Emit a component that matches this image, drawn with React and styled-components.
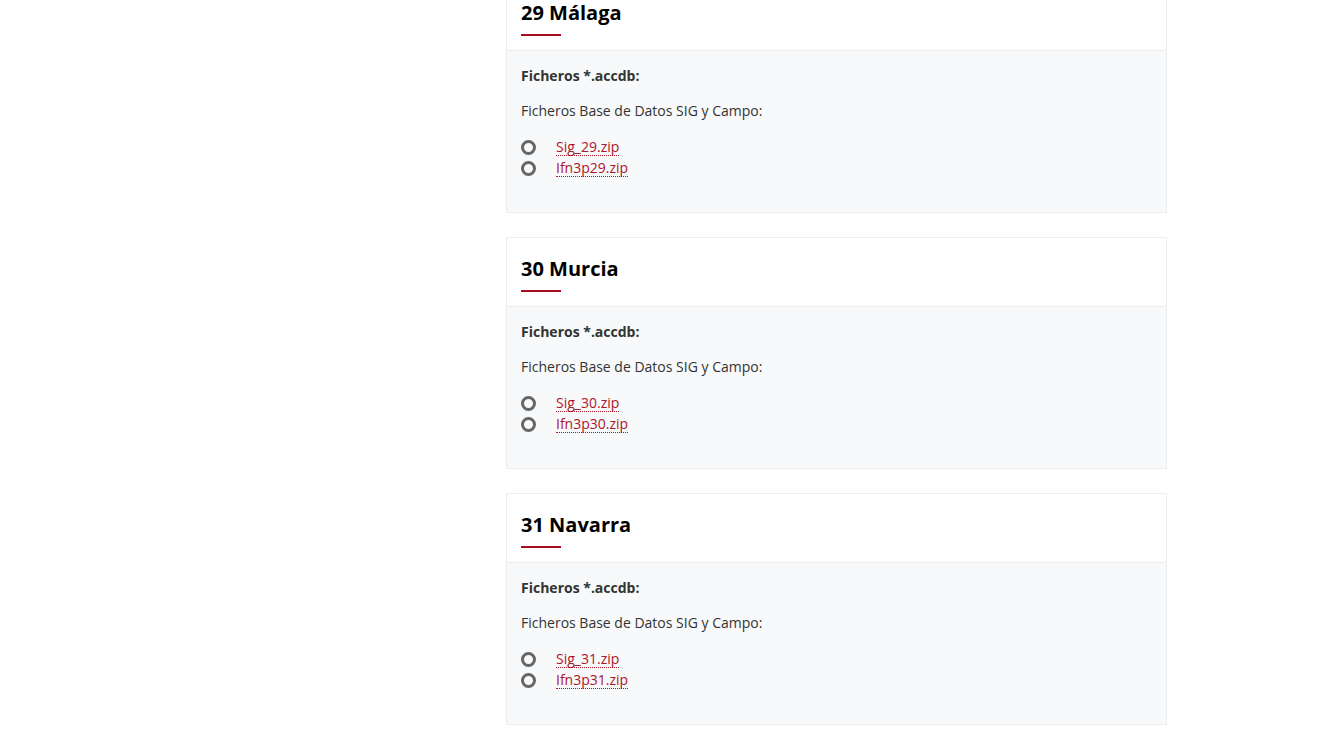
import React from "react";
import styled, { createGlobalStyle } from "styled-components";

const Global = createGlobalStyle`
  html, body { margin: 0; padding: 0; background: #fff; }
  body { font-family: "Open Sans", "Noto Sans", sans-serif; color: #333; }
  * { box-sizing: border-box; }
`;

const Page = styled.div`
  display: grid;
  grid-template-columns: 506px 661px 1fr;
  margin-top: -19px;
`;

const Column = styled.div`
  grid-column: 2;
  display: flex;
  flex-direction: column;
  gap: 24px;
`;

const Card = styled.section`
  border: 1px solid #ededed;
  background: #fff;
`;

const Header = styled.div`
  padding: 18px 14px 14px;
  border-bottom: 1px solid #ededed;
`;

const Title = styled.h2`
  margin: 0;
  font-size: 20px;
  line-height: 26px;
  font-weight: 700;
  color: #000;
`;

const Rule = styled.div`
  width: 40px;
  height: 2px;
  background: #a50e1e;
  margin-top: 8px;
`;

const Body = styled.div`
  background: #f8f9fa;
  padding: 14px 14px 34px;
  font-size: 14px;
  line-height: 21px;
`;

const Label = styled.p`
  margin: 0 0 14px;
  font-weight: 700;
`;

const Text = styled.p`
  margin: 0 0 15px;
`;

const List = styled.ul`
  margin: 0;
  padding: 0;
  list-style: none;
`;

const Item = styled.li`
  display: flex;
  align-items: center;
  gap: 20px;
  height: 21px;
`;

const Bullet = styled.span`
  width: 15px;
  height: 15px;
  border-radius: 50%;
  border: 3px solid #666;
  flex: none;
  margin-top: 1px;
`;

const Link = styled.a`
  color: #ab1527;
  text-decoration: none;
  border-bottom: 1px dotted #ab1527;
  line-height: 17px;
`;

const data = [
  { code: "29", name: "Málaga" },
  { code: "30", name: "Murcia" },
  { code: "31", name: "Navarra" },
];

export default function App() {
  return (
    <>
      <Global />
      <Page>
        <Column>
          {data.map((d) => (
            <Card key={d.code}>
              <Header>
                <Title>
                  {d.code} {d.name}
                </Title>
                <Rule />
              </Header>
              <Body>
                <Label>Ficheros *.accdb:</Label>
                <Text>Ficheros Base de Datos SIG y Campo:</Text>
                <List>
                  <Item>
                    <Bullet />
                    <Link href="#">Sig_{d.code}.zip</Link>
                  </Item>
                  <Item>
                    <Bullet />
                    <Link href="#">Ifn3p{d.code}.zip</Link>
                  </Item>
                </List>
              </Body>
            </Card>
          ))}
        </Column>
      </Page>
    </>
  );
}
